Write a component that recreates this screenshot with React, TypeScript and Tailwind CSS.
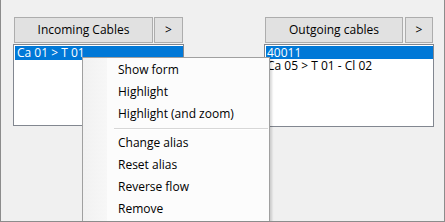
import React from "react";

const font = { fontFamily: '"Open Sans", "Noto Sans", "Liberation Sans", sans-serif' };

function Btn({ w, children }: { w: string; children: React.ReactNode }) {
  return (
    <div
      className={`${w} h-[26px] flex items-center justify-center bg-[#e1e1e1] border border-[#adadad] text-[12px] text-black`}
    >
      {children}
    </div>
  );
}

export default function App() {
  const items1 = ["Show form", "Highlight", "Highlight (and zoom)"];
  const items2 = ["Change alias", "Reset alias", "Reverse flow", "Remove"];
  return (
    <div
      className="relative w-[445px] h-[222px] overflow-hidden bg-[#f0f0f0] border-x border-b border-[#8c8c8c]"
      style={font}
    >
      <div className="flex pl-[12px] pt-[17px] gap-[80px]">
        <div className="flex flex-col w-[171px] gap-[1px]">
          <div className="flex ml-[1px] gap-[1px]">
            <Btn w="w-[139px]">Incoming Cables</Btn>
            <Btn w="w-[29px]">&gt;</Btn>
          </div>
          <div className="h-[82px] bg-white border border-[#828790] p-[1px] pr-0">
            <div className="h-[14px] leading-[14px] bg-[#0078d7] text-white text-[12px] pl-[2px]">
              Ca 01 &gt; T 01
            </div>
          </div>
        </div>
        <div className="flex flex-col w-[170px] gap-[1px]">
          <div className="flex ml-[1px] gap-[2px]">
            <Btn w="w-[138px]">Outgoing cables</Btn>
            <Btn w="w-[28px]">&gt;</Btn>
          </div>
          <div className="h-[83px] bg-white border border-[#828790] p-[1px] pr-0">
            <div className="h-[13px] leading-[13px] bg-[#0078d7] text-white text-[12px] pl-[1px]">
              40011
            </div>
            <div className="h-[13px] leading-[13px] text-black text-[12px] pl-[1px]">
              Ca 05 &gt; T 01 - Cl 02
            </div>
          </div>
        </div>
      </div>

      <div className="absolute left-[81px] top-[57px] w-[188px] h-[175px] flex bg-[#fcfcfc] border border-[#a0a0a0] shadow-[2px_2px_2px_rgba(0,0,0,0.15)]">
        <div className="w-[24px] bg-[linear-gradient(to_right,#f1f1f1,#f7f7f7)]" />
        <div className="flex-1 flex flex-col pt-[1px] text-[12px] text-black">
          {items1.map((t) => (
            <div key={t} className="h-[22px] leading-[22px] pl-[11px]">
              {t}
            </div>
          ))}
          <div className="h-[7px] flex flex-col justify-center pl-[7px] pr-[1px]">
            <div className="h-[1px] bg-[#d7d7d7]" />
            <div className="h-[1px] bg-white" />
          </div>
          {items2.map((t) => (
            <div key={t} className="h-[22px] leading-[22px] pl-[11px]">
              {t}
            </div>
          ))}
        </div>
      </div>
    </div>
  );
}
